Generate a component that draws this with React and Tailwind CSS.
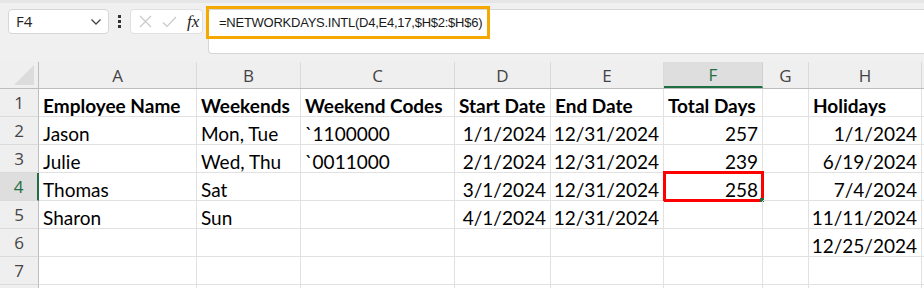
import React from 'react';

const cols = [
  { key: 'A', w: 'w-[158px]' },
  { key: 'B', w: 'w-[104px]' },
  { key: 'C', w: 'w-[154px]' },
  { key: 'D', w: 'w-[96px]' },
  { key: 'E', w: 'w-[113px]' },
  { key: 'F', w: 'w-[99px]' },
  { key: 'G', w: 'w-[46px]' },
  { key: 'H', w: 'w-[113px]' },
];

// each row: [A, B, C, D, E, F, G, H]; numbers/dates right aligned
const rows = [
  { n: 1, bold: true, cells: ['Employee Name', 'Weekends', 'Weekend Codes', 'Start Date', 'End Date', 'Total Days', '', 'Holidays'] },
  { n: 2, cells: ['Jason', 'Mon, Tue', '`1100000', '1/1/2024', '12/31/2024', '257', '', '1/1/2024'] },
  { n: 3, cells: ['Julie', 'Wed, Thu', '`0011000', '2/1/2024', '12/31/2024', '239', '', '6/19/2024'] },
  { n: 4, cells: ['Thomas', 'Sat', '', '3/1/2024', '12/31/2024', '258', '', '7/4/2024'] },
  { n: 5, cells: ['Sharon', 'Sun', '', '4/1/2024', '12/31/2024', '', '', '11/11/2024'] },
  { n: 6, cells: ['', '', '', '', '', '', '', '12/25/2024'] },
  { n: 7, cells: ['', '', '', '', '', '', '', ''] },
  { n: 8, hideLabel: true, cells: ['', '', '', '', '', '', '', ''] },
];

const rightCols = ['D', 'E', 'F', 'H'];

function FormulaBar() {
  return (
    <div className="relative h-[62px] bg-[#f0f0f0] border-t-[3px] border-[#e6e6e6]">
      <div className="flex items-start pt-[6px]">
        <div className="ml-[8px] w-[101px] h-[25px] bg-white border border-[#d6d6d6] rounded-[4px] flex items-center justify-between pl-[7px] pr-[6px]">
          <span className="font-['Open_Sans',sans-serif] text-[15px] text-[#222]">F4</span>
          <svg width="12" height="8" viewBox="0 0 12 8">
            <path d="M1.5 1.5 L6 6 L10.5 1.5" fill="none" stroke="#444" strokeWidth="1.3" />
          </svg>
        </div>
        <div className="w-[21px] h-[25px] flex flex-col items-center justify-center gap-[2px]">
          <span className="w-[3px] h-[3px] bg-[#333]" />
          <span className="w-[3px] h-[3px] bg-[#333]" />
          <span className="w-[3px] h-[3px] bg-[#333]" />
        </div>
        <div className="w-[73px] h-[25px] bg-white border border-[#e0e0e0] rounded-[4px] flex items-center pl-[8px] gap-[10px]">
          <svg width="13" height="13" viewBox="0 0 13 13">
            <path d="M1 1 L12 12 M12 1 L1 12" stroke="#c9c9c9" strokeWidth="1.2" />
          </svg>
          <svg width="15" height="12" viewBox="0 0 15 12">
            <path d="M1 6.5 L5 10.5 L14 1" fill="none" stroke="#c9c9c9" strokeWidth="1.2" />
          </svg>
          <span className="font-['Liberation_Serif',serif] italic text-[17px] leading-none text-[#222]">fx</span>
        </div>
        <div className="ml-[5px] flex-1 h-[45px] bg-white border border-[#d6d6d6] border-r-0 rounded-l-[4px]" />
      </div>
      <div className="absolute left-[206px] top-[3px] w-[284px] h-[33px] border-[3px] border-[#f5a800] flex items-center pl-[10px]">
        <span className="font-['Liberation_Sans',sans-serif] text-[13px] text-[#1a1a1a] tracking-[-0.25px]">
          =NETWORKDAYS.INTL(D4,E4,17,$H$2:$H$6)
        </span>
      </div>
    </div>
  );
}

function HeaderRow() {
  return (
    <div className="flex h-[27px] bg-[#efefef] border-b border-[#bdbdbd]">
      <div className="relative w-[39px] border-r border-[#bdbdbd]">
        <svg className="absolute right-[4px] bottom-[3px]" width="20" height="20" viewBox="0 0 20 20">
          <path d="M20 0 L20 20 L0 20 Z" fill="#dcdcdc" />
        </svg>
      </div>
      {cols.map((c) => (
        <div
          key={c.key}
          className={`${c.w} shrink-0 flex items-center justify-center pt-[1px] border-r font-['Open_Sans',sans-serif] text-[17px] ${
            c.key === 'F'
              ? 'bg-[#dedede] text-[#1e6e42] border-[#d0d0d0] border-b-2 border-b-[#1e6e42]'
              : 'text-[#444] border-[#dadada]'
          }`}
        >
          {c.key}
        </div>
      ))}
      <div className="flex-1" />
    </div>
  );
}

function DataRow({ row }) {
  const active = row.n === 4;
  return (
    <div className="flex h-[28px]">
      <div
        className={`w-[39px] shrink-0 flex items-center justify-center pt-[1px] border-b border-[#dadada] font-['Open_Sans',sans-serif] text-[17px] ${
          active
            ? 'bg-[#dedede] text-[#1e6e42] border-r-2 border-r-[#1e6e42]'
            : 'bg-[#efefef] text-[#444] border-r border-r-[#bdbdbd]'
        }`}
      >
        {row.hideLabel ? '' : row.n}
      </div>
      {cols.map((c, i) => {
        const selected = active && c.key === 'F';
        const right = rightCols.includes(c.key) && !row.bold;
        return (
          <div
            key={c.key}
            className={`${c.w} shrink-0 relative flex items-end border-r border-b border-[#e1e1e1] font-['Lato',sans-serif] text-[19px] leading-[23px] text-black whitespace-nowrap ${
              row.bold ? 'font-bold' : ''
            } ${right ? 'justify-end pr-[4px]' : 'pl-[4px]'}`}
          >
            <span className="translate-y-[1px]">{row.cells[i]}</span>
            {selected && (
              <div className="absolute -left-[1px] -top-[2px] -right-[2px] -bottom-[2px] border-[3px] border-[#ff0000]">
                <span className="absolute -right-[3px] -bottom-[3px] w-[4px] h-[4px] bg-[#1e6e42]" />
              </div>
            )}
          </div>
        );
      })}
      <div className="flex-1 border-b border-[#e1e1e1]" />
    </div>
  );
}

export default function App() {
  return (
    <div className="w-[924px] h-[288px] overflow-hidden bg-white">
      <FormulaBar />
      <HeaderRow />
      {rows.map((r) => (
        <DataRow key={r.n} row={r} />
      ))}
    </div>
  );
}
